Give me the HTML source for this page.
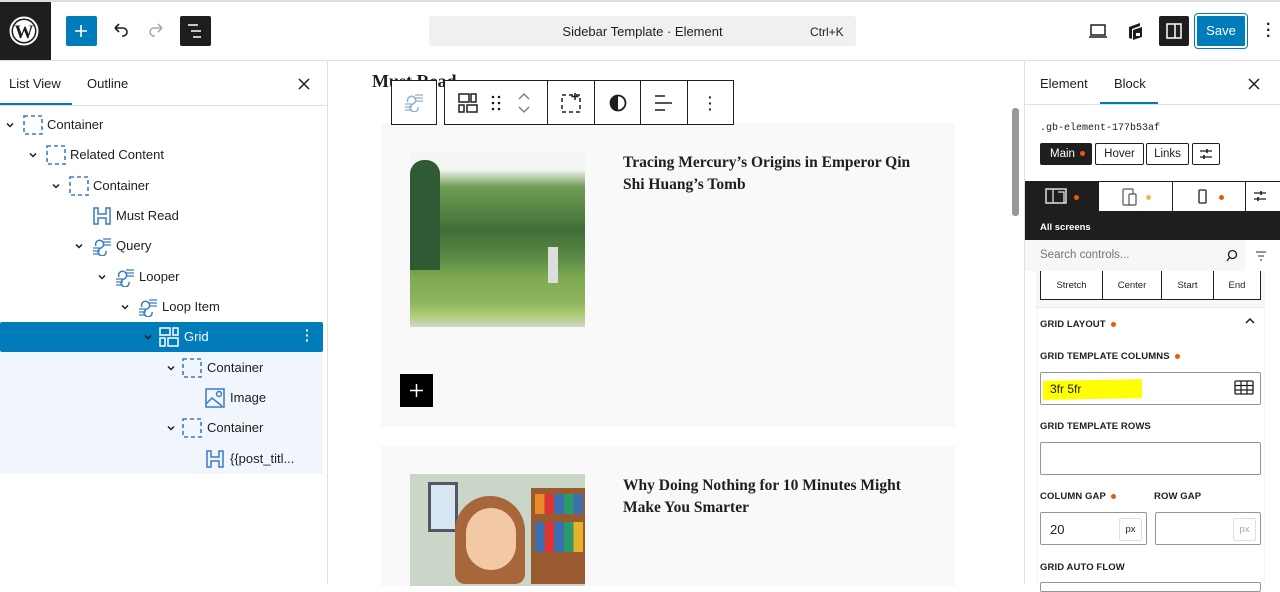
<!DOCTYPE html>
<html><head><meta charset="utf-8"><style>
*{box-sizing:border-box;margin:0;padding:0}
body{width:1280px;height:584px;overflow:hidden;background:#fff;font-family:"Liberation Sans",sans-serif;color:#1e1e1e;position:relative;font-size:13px}
.a{position:absolute}
.row{position:absolute;left:0;width:323px;height:30px;font-size:13px}
.row span{position:absolute;top:7px}
.chev{position:absolute;top:9px;width:12px;height:12px}
.ico{position:absolute;top:5px}
.tb{position:absolute;top:80px;height:45px;border:1px solid #1e1e1e;background:#fff}
.lbl{position:absolute;font-size:9.5px;font-weight:bold;color:#1e1e1e;letter-spacing:.1px}
.dot{display:inline-block;width:5px;height:5px;border-radius:50%;background:#e65c0b;margin-left:5px;vertical-align:middle}
.inp{position:absolute;border:1px solid #949494;border-radius:2px;background:#fff}
.serif{font-family:"Liberation Serif",serif;font-weight:bold;white-space:nowrap}
</style></head><body>
<!-- top bar -->
<div class="a" style="left:0;top:0;width:1280px;height:2px;background:#ddd"></div>
<div class="a" style="left:0;top:60px;width:1280px;height:1px;background:#e0e0e0"></div>
<div class="a" style="left:0;top:2px;width:51px;height:58px;background:#1e1e1e"></div>
<svg class="a" style="left:9px;top:16px" width="30" height="30" viewBox="0 0 30 30"><circle cx="15" cy="15" r="13.5" fill="none" stroke="#fff" stroke-width="2"/><circle cx="15" cy="15" r="11" fill="#fff"/><text x="15" y="22" text-anchor="middle" font-family="Liberation Serif" font-weight="bold" font-size="19" fill="#1e1e1e">W</text></svg>
<div class="a" style="left:66px;top:16px;width:31px;height:30px;background:#007cba;border-radius:2px"></div>
<svg class="a" style="left:72px;top:22px" width="18" height="18"><path d="M9 3v12M3 9h12" stroke="#fff" stroke-width="1.6"/></svg>
<svg class="a" style="left:110px;top:22px" width="20" height="18"><path d="M5 6h8a4 4 0 0 1 0 8h-1M5 6l4-4M5 6l4 4" fill="none" stroke="#1e1e1e" stroke-width="1.6"/></svg>
<svg class="a" style="left:147px;top:22px" width="20" height="18"><path d="M15 6H7a4 4 0 0 0 0 8h1M15 6l-4-4M15 6l-4 4" fill="none" stroke="#aaa" stroke-width="1.6"/></svg>
<div class="a" style="left:180px;top:16px;width:31px;height:30px;background:#1e1e1e;border-radius:2px"></div>
<svg class="a" style="left:185px;top:22px" width="22" height="18"><path d="M3 3h10M6 9h10M8 15h8" stroke="#fff" stroke-width="1.6"/></svg>
<div class="a" style="left:429px;top:16px;width:427px;height:30px;background:#f0f0f0;border-radius:3px"></div>
<div class="a" style="left:429px;top:24px;width:427px;text-align:center;font-size:13px">Sidebar Template · Element</div>
<div class="a" style="left:810px;top:25px;font-size:12px">Ctrl+K</div>
<svg class="a" style="left:1088px;top:22px" width="20" height="18"><path d="M3 3h14v10H3zM1 15h18" fill="none" stroke="#1e1e1e" stroke-width="1.5"/></svg>
<svg class="a" style="left:1126px;top:21px" width="18" height="20"><path d="M3 6l11-4v3L6 8v10L3 17z M7 9l9-3v10l-9 3z" fill="#1e1e1e"/><path d="M10 12h4v3h-4z" fill="#fff"/></svg>
<div class="a" style="left:1159px;top:16px;width:30px;height:30px;background:#1e1e1e;border-radius:2px"></div>
<svg class="a" style="left:1163px;top:20px" width="22" height="22"><rect x="4" y="4" width="14" height="14" fill="none" stroke="#fff" stroke-width="1.5"/><path d="M12 4v14" stroke="#fff" stroke-width="1.5"/></svg>
<div class="a" style="left:1196px;top:15px;width:50px;height:32px;background:#007cba;border-radius:2px;outline:1.5px solid #007cba;outline-offset:1px;border:1px solid #fff;color:#fff;text-align:center;line-height:29px;font-size:13px">Save</div>
<div class="a" style="left:1266px;top:22px;font-size:16px;font-weight:bold;line-height:6px">·<br>·<br>·</div>

<!-- left panel -->
<div class="a" style="left:327px;top:61px;width:1px;height:523px;background:#e0e0e0"></div>
<div class="a" style="left:0;top:105px;width:327px;height:1px;background:#e0e0e0"></div>
<div class="a" style="left:9px;top:76px;font-size:13px">List View</div>
<div class="a" style="left:87px;top:76px;font-size:13px">Outline</div>
<div class="a" style="left:0;top:103px;width:72px;height:2px;background:#007cba"></div>
<svg class="a" style="left:297px;top:77px" width="14" height="14"><path d="M2 2l10 10M12 2L2 12" stroke="#1e1e1e" stroke-width="1.5"/></svg>
<div class="a" style="left:0;top:352px;width:323px;height:122px;background:#f0f6fc"></div>
<div class="a" style="left:0;top:322px;width:323px;height:30px;background:#007cba;border-radius:2px"></div>

<svg width="0" height="0" style="position:absolute"><defs>
<symbol id="cont" viewBox="0 0 20 20"><rect x="1" y="1" width="18" height="18" fill="none" stroke="#3a7cc4" stroke-width="1.6" stroke-dasharray="4 3"/></symbol>
<symbol id="head" viewBox="0 0 20 20"><path d="M2 2h4v6h8V2h4v16h-4v-6H6v6H2z" fill="none" stroke="#3a7cc4" stroke-width="1.5"/></symbol>
<symbol id="query" viewBox="0 0 22 20"><path d="M12 3h8M12 6h8M12 9h8M2 12h7M2 15h7M2 18h7" stroke="#3a7cc4" stroke-width="1.3"/><path d="M5 10a4 4 0 1 1 5 2a4 4 0 1 0 5 3" fill="none" stroke="#3a7cc4" stroke-width="1.5"/></symbol>
<symbol id="grid" viewBox="0 0 20 20"><path d="M1 1h10v7H1zM14 1h5v7h-5zM1 11h5v8H1zM9 11h10v8H9z" fill="none" stroke="#fff" stroke-width="1.5"/></symbol>
<symbol id="img" viewBox="0 0 20 20"><rect x="1" y="1" width="18" height="18" fill="none" stroke="#3a7cc4" stroke-width="1.5"/><path d="M1 16l6-6 10 8" fill="none" stroke="#3a7cc4" stroke-width="1.5"/><circle cx="14" cy="6" r="2.5" fill="none" stroke="#3a7cc4" stroke-width="1.5"/></symbol>
<symbol id="chv" viewBox="0 0 12 12"><path d="M3 4.5l3 3 3-3" fill="none" stroke="#1e1e1e" stroke-width="1.5"/></symbol>
</defs></svg>

<div class="row" style="top:110px"><svg class="chev" style="left:4px"><use href="#chv"/></svg><svg class="ico" style="left:23px" width="20" height="20"><use href="#cont"/></svg><span style="left:47px">Container</span></div>
<div class="row" style="top:140px"><svg class="chev" style="left:27px"><use href="#chv"/></svg><svg class="ico" style="left:46px" width="20" height="20"><use href="#cont"/></svg><span style="left:70px">Related Content</span></div>
<div class="row" style="top:171px"><svg class="chev" style="left:50px"><use href="#chv"/></svg><svg class="ico" style="left:69px" width="20" height="20"><use href="#cont"/></svg><span style="left:93px">Container</span></div>
<div class="row" style="top:201px"><svg class="ico" style="left:92px" width="20" height="20"><use href="#head"/></svg><span style="left:116px">Must Read</span></div>
<div class="row" style="top:231px"><svg class="chev" style="left:73px"><use href="#chv"/></svg><svg class="ico" style="left:91px" width="22" height="20"><use href="#query"/></svg><span style="left:116px">Query</span></div>
<div class="row" style="top:262px"><svg class="chev" style="left:96px"><use href="#chv"/></svg><svg class="ico" style="left:114px" width="22" height="20"><use href="#query"/></svg><span style="left:139px">Looper</span></div>
<div class="row" style="top:292px"><svg class="chev" style="left:119px"><use href="#chv"/></svg><svg class="ico" style="left:137px" width="22" height="20"><use href="#query"/></svg><span style="left:162px">Loop Item</span></div>
<div class="row" style="top:322px;color:#fff"><svg class="chev" style="left:142px"><use href="#chv" style="stroke:#fff"/></svg><svg class="ico" style="left:159px" width="20" height="20"><use href="#grid"/></svg><span style="left:184px">Grid</span><span style="left:305px;top:6px;font-weight:bold;line-height:5px;font-size:14px">·<br>·<br>·</span></div>
<div class="row" style="top:353px"><svg class="chev" style="left:165px"><use href="#chv"/></svg><svg class="ico" style="left:182px" width="20" height="20"><use href="#cont"/></svg><span style="left:207px">Container</span></div>
<div class="row" style="top:383px"><svg class="ico" style="left:205px" width="20" height="20"><use href="#img"/></svg><span style="left:230px">Image</span></div>
<div class="row" style="top:413px"><svg class="chev" style="left:165px"><use href="#chv"/></svg><svg class="ico" style="left:182px" width="20" height="20"><use href="#cont"/></svg><span style="left:207px">Container</span></div>
<div class="row" style="top:444px"><svg class="ico" style="left:205px" width="20" height="20"><use href="#head"/></svg><span style="left:230px">{{post_titl...</span></div>

<!-- canvas -->
<div class="a serif" style="left:372px;top:71px;font-size:18px">Must Read</div>
<div class="a" style="left:381px;top:123px;width:574px;height:304px;background:#f9f9f9"></div>
<div class="a" style="left:381px;top:446px;width:574px;height:140px;background:#f9f9f9"></div>
<div class="a" style="left:410px;top:152px;width:175px;height:175px;background:linear-gradient(#f4f6f4 0%,#f4f6f4 10%,#6f9d55 20%,#3f6f37 45%,#5a8a45 60%,#7faa50 72%,#8db560 86%,#a9c96e 92%,#cfd8c4 100%)"></div>
<div class="a" style="left:410px;top:160px;width:30px;height:110px;background:#2f5a33;border-radius:14px 14px 0 0"></div>
<div class="a" style="left:548px;top:247px;width:10px;height:36px;background:#ddd"></div>
<div class="a" style="left:410px;top:474px;width:175px;height:112px;background:#c9d6c8"></div>
<div class="a" style="left:428px;top:482px;width:30px;height:50px;background:#d7e6f0;border:3px solid #556"></div>
<div class="a" style="left:531px;top:488px;width:54px;height:96px;background:#9a5a30"></div>
<div class="a" style="left:535px;top:494px;width:48px;height:20px;background:linear-gradient(90deg,#e98a2b 0 20%,#d33 20% 40%,#3b6fb0 40% 60%,#2a9a6a 60% 80%,#3b6fb0 80%)"></div>
<div class="a" style="left:535px;top:522px;width:48px;height:30px;background:linear-gradient(90deg,#3b6fb0 0 20%,#d33 20% 40%,#3b6fb0 40% 60%,#2a9a6a 60% 80%,#e9b02b 80%)"></div>
<div class="a" style="left:455px;top:496px;width:70px;height:88px;background:#a8673a;border-radius:35px 35px 10px 10px"></div>
<div class="a" style="left:466px;top:508px;width:50px;height:62px;background:#f3c9a5;border-radius:25px"></div>
<div class="a serif" style="left:623px;top:152px;font-size:15.5px;line-height:22px">Tracing Mercury’s Origins in Emperor Qin<br>Shi Huang’s Tomb</div>
<div class="a serif" style="left:623px;top:475px;font-size:15.5px;line-height:22px">Why Doing Nothing for 10 Minutes Might<br>Make You Smarter</div>
<div class="a" style="left:400px;top:374px;width:33px;height:33px;background:#000"></div>
<svg class="a" style="left:408px;top:382px" width="17" height="17"><path d="M8.5 2v13M2 8.5h13" stroke="#fff" stroke-width="1.5"/></svg>
<!-- block toolbar -->
<div class="tb" style="left:391px;width:46px"><svg style="position:absolute;left:11px;top:11px" width="22" height="20"><use href="#query" style="opacity:.6"/></svg></div>
<div class="tb" style="left:444px;width:290px"></div>
<div class="a" style="left:547px;top:80px;width:1px;height:45px;background:#1e1e1e"></div>
<div class="a" style="left:594px;top:80px;width:1px;height:45px;background:#1e1e1e"></div>
<div class="a" style="left:640px;top:80px;width:1px;height:45px;background:#1e1e1e"></div>
<div class="a" style="left:687px;top:80px;width:1px;height:45px;background:#1e1e1e"></div>
<svg class="a" style="left:457px;top:92px" width="22" height="22"><path d="M2 2h10v8H2zM14 2h5v8h-5zM2 13h5v7H2zM10 13h10v7H10z" fill="none" stroke="#1e1e1e" stroke-width="1.5"/></svg>
<svg class="a" style="left:490px;top:94px" width="12" height="18"><g fill="#1e1e1e"><circle cx="3" cy="3" r="1.3"/><circle cx="9" cy="3" r="1.3"/><circle cx="3" cy="9" r="1.3"/><circle cx="9" cy="9" r="1.3"/><circle cx="3" cy="15" r="1.3"/><circle cx="9" cy="15" r="1.3"/></g></svg>
<svg class="a" style="left:516px;top:91px" width="16" height="24"><path d="M3 8l5-5 5 5M3 16l5 5 5-5" fill="none" stroke="#777" stroke-width="1.3"/></svg>
<svg class="a" style="left:560px;top:92px" width="22" height="22"><rect x="2" y="3" width="18" height="17" fill="none" stroke="#1e1e1e" stroke-width="1.5" stroke-dasharray="4 3"/><path d="M15 1v7M11.5 4.5h7" stroke="#1e1e1e" stroke-width="1.5"/></svg>
<svg class="a" style="left:608px;top:93px" width="20" height="20"><circle cx="10" cy="10" r="7.5" fill="none" stroke="#1e1e1e" stroke-width="1.8"/><path d="M10 2.5a7.5 7.5 0 0 0 0 15z" fill="#1e1e1e"/></svg>
<svg class="a" style="left:653px;top:93px" width="22" height="20"><path d="M2 3h10M2 10h17M2 17h10" stroke="#1e1e1e" stroke-width="1.5"/></svg>
<div class="a" style="left:708px;top:94px;font-size:14px;font-weight:bold;line-height:6px">·<br>·<br>·</div>

<!-- right panel -->
<div class="a" style="left:1024px;top:61px;width:1px;height:523px;background:#e0e0e0"></div>
<div class="a" style="left:1012px;top:108px;width:7px;height:108px;background:#999;border-radius:3px"></div>
<div class="a" style="left:1025px;top:104px;width:255px;height:1px;background:#e0e0e0"></div>
<div class="a" style="left:1040px;top:76px">Element</div>
<div class="a" style="left:1114px;top:76px">Block</div>
<div class="a" style="left:1100px;top:102px;width:58px;height:2px;background:#007cba"></div>
<svg class="a" style="left:1247px;top:77px" width="14" height="14"><path d="M2 2l10 10M12 2L2 12" stroke="#1e1e1e" stroke-width="1.5"/></svg>
<div class="a" style="left:1040px;top:123px;font-family:'Liberation Mono',monospace;font-size:10px">.gb-element-177b53af</div>
<div class="a" style="left:1040px;top:143px;width:52px;height:22px;background:#1e1e1e;border-radius:2px;color:#fff;font-size:11.5px;line-height:22px;padding-left:10px">Main<span class="dot"></span></div>
<div class="a" style="left:1095px;top:143px;width:49px;height:22px;border:1px solid #1e1e1e;border-radius:2px;font-size:11.5px;line-height:20px;text-align:center">Hover</div>
<div class="a" style="left:1146px;top:143px;width:43px;height:22px;border:1px solid #1e1e1e;border-radius:2px;font-size:11.5px;line-height:20px;text-align:center">Links</div>
<div class="a" style="left:1192px;top:143px;width:28px;height:22px;border:1px solid #1e1e1e;border-radius:2px"></div>
<svg class="a" style="left:1199px;top:148px" width="14" height="12"><path d="M1 3h12M1 9h12" stroke="#1e1e1e" stroke-width="1.3"/><path d="M8 1v4M5 7v4" stroke="#1e1e1e" stroke-width="1.6"/></svg>
<div class="a" style="left:1025px;top:181px;width:255px;height:59px;background:#1e1e1e"></div>
<div class="a" style="left:1099px;top:182px;width:73px;height:29px;background:#fff"></div>
<div class="a" style="left:1173px;top:182px;width:72px;height:29px;background:#fff"></div>
<div class="a" style="left:1246px;top:182px;width:34px;height:29px;background:#fff"></div>
<svg class="a" style="left:1045px;top:188px" width="24" height="16"><rect x="1" y="1" width="20" height="14" fill="none" stroke="#ddd" stroke-width="1.5"/><path d="M8 1v14M13 4h6v11" fill="none" stroke="#ddd" stroke-width="1.3"/></svg>
<div class="a" style="left:1074px;top:195px;width:5px;height:5px;border-radius:50%;background:#e65c0b"></div>
<svg class="a" style="left:1122px;top:188px" width="16" height="18"><rect x="1" y="1" width="10" height="16" rx="1" fill="none" stroke="#555" stroke-width="1.2"/><rect x="7" y="6" width="7" height="11" rx="1" fill="#fff" stroke="#555" stroke-width="1.2"/></svg>
<div class="a" style="left:1146px;top:195px;width:5px;height:5px;border-radius:50%;background:#f0b849"></div>
<svg class="a" style="left:1198px;top:189px" width="10" height="16"><rect x="1" y="1" width="7" height="13" rx="1" fill="none" stroke="#1e1e1e" stroke-width="1.3"/></svg>
<div class="a" style="left:1219px;top:195px;width:5px;height:5px;border-radius:50%;background:#e65c0b"></div>
<svg class="a" style="left:1253px;top:190px" width="14" height="12"><path d="M1 3h12M1 9h12" stroke="#1e1e1e" stroke-width="1.3"/><path d="M8 1v4M5 7v4" stroke="#1e1e1e" stroke-width="1.6"/></svg>
<div class="a" style="left:1040px;top:222px;color:#fff;font-size:9.5px;font-weight:bold">All screens</div>
<div class="a" style="left:1025px;top:240px;width:255px;height:31px;background:#f7f7f7"></div>
<div class="a" style="left:1245px;top:240px;width:35px;height:31px;background:#fff"></div>
<div class="a" style="left:1040px;top:249px;font-size:11.5px;color:#757575">Search controls...</div>
<svg class="a" style="left:1225px;top:249px" width="14" height="14"><circle cx="7.5" cy="5.5" r="4" fill="none" stroke="#1e1e1e" stroke-width="1.3"/><path d="M5 8l-3 4" stroke="#1e1e1e" stroke-width="1.3"/></svg>
<svg class="a" style="left:1255px;top:250px" width="12" height="12"><path d="M1 2h10M3 6h6M5 10h2" stroke="#555" stroke-width="1.3"/></svg>
<div class="a" style="left:1036px;top:271px;width:229px;height:313px;background:#f7f7f7"></div>
<div class="a" style="left:1040px;top:271px;width:221px;height:29px;border:1px solid #1e1e1e;border-top:none;background:#fff;font-size:9.5px;display:flex">
<div style="width:62px;border-right:1px solid #1e1e1e;text-align:center;line-height:29px">Stretch</div>
<div style="width:59px;border-right:1px solid #1e1e1e;text-align:center;line-height:29px">Center</div>
<div style="width:52px;border-right:1px solid #1e1e1e;text-align:center;line-height:29px">Start</div>
<div style="flex:1;text-align:center;line-height:29px">End</div></div>
<div class="a" style="left:1036px;top:307px;width:229px;height:1px;background:#e8e8e8"></div>
<div class="a" style="left:1038px;top:308px;width:226px;height:276px;background:#fff"></div>
<div class="lbl" style="left:1040px;top:319px">GRID LAYOUT<span class="dot"></span></div>
<svg class="a" style="left:1244px;top:316px" width="12" height="10"><path d="M2 7l4-4 4 4" fill="none" stroke="#1e1e1e" stroke-width="1.5"/></svg>
<div class="lbl" style="left:1040px;top:351px">GRID TEMPLATE COLUMNS<span class="dot"></span></div>
<div class="inp" style="left:1040px;top:372px;width:221px;height:33px"></div>
<div class="a" style="left:1043px;top:380px;width:99px;height:19px;background:#ffff00;transform:skewY(-1deg)"></div>
<div class="a" style="left:1050px;top:382px;font-size:12px">3fr 5fr</div>
<svg class="a" style="left:1234px;top:380px" width="20" height="16"><rect x="1" y="1" width="18" height="13" rx="1" fill="none" stroke="#1e1e1e" stroke-width="1.3"/><path d="M1 5.5h18M1 10h18M7 1v13M13 1v13" stroke="#1e1e1e" stroke-width="1.2"/></svg>
<div class="lbl" style="left:1040px;top:421px">GRID TEMPLATE ROWS</div>
<div class="inp" style="left:1040px;top:442px;width:221px;height:33px"></div>
<div class="lbl" style="left:1040px;top:491px">COLUMN GAP<span class="dot"></span></div>
<div class="lbl" style="left:1154px;top:491px">ROW GAP</div>
<div class="inp" style="left:1040px;top:512px;width:107px;height:33px"></div>
<div class="a" style="left:1050px;top:522px;font-size:13px">20</div>
<div class="a" style="left:1119px;top:518px;width:23px;height:23px;border:1px solid #e0e0e0;border-radius:2px;font-size:9.5px;text-align:center;line-height:21px">px</div>
<div class="inp" style="left:1155px;top:512px;width:106px;height:33px"></div>
<div class="a" style="left:1233px;top:518px;width:23px;height:23px;border:1px solid #e0e0e0;border-radius:2px;font-size:9.5px;text-align:center;line-height:21px;color:#aaa">px</div>
<div class="lbl" style="left:1040px;top:562px">GRID AUTO FLOW</div>
<div class="inp" style="left:1040px;top:582px;width:221px;height:10px"></div>
</body></html>
